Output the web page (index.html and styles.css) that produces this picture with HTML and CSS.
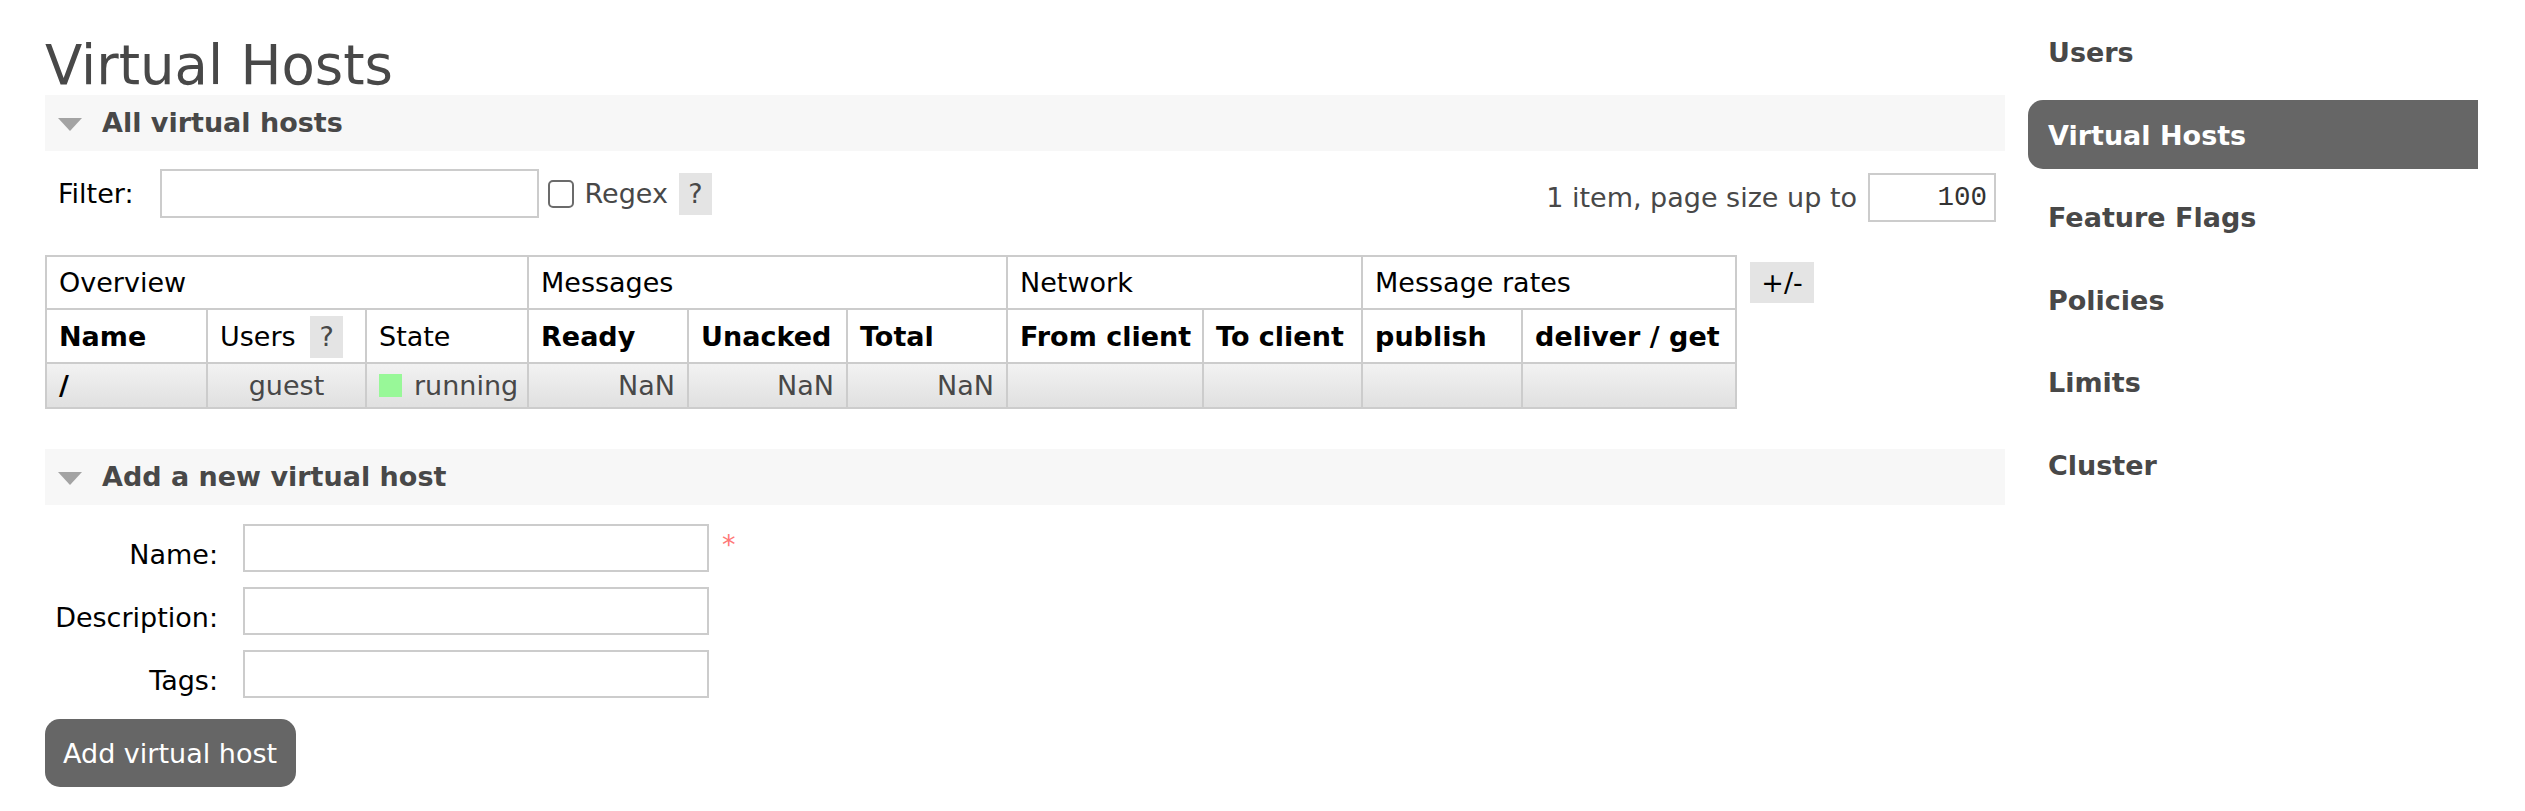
FILE: index.html
```html
<!DOCTYPE html>
<html>
<head>
<meta charset="utf-8">
<title>Virtual Hosts</title>
<link rel="stylesheet" href="styles.css">
</head>
<body>
<div class="page">
  <main class="main">
    <h1 class="title">Virtual Hosts</h1>

    <section class="section">
      <h2 class="section-head"><span class="tri"></span>All virtual hosts</h2>
      <div class="filter-row">
        <div class="filter-left">
          <label class="filter-label">Filter:</label>
          <input class="text-input filter-input" type="text">
          <input class="check" type="checkbox">
          <span class="regex">Regex</span>
          <span class="help">?</span>
        </div>
        <div class="filter-right">
          <span class="count">1 item, page size up to</span>
          <input class="text-input page-size" type="text" value="100">
        </div>
      </div>

      <div class="table-wrap">
        <table class="list">
          <colgroup>
            <col class="w-name"><col class="w-users"><col class="w-state">
            <col class="w-ready"><col class="w-unacked"><col class="w-total">
            <col class="w-from"><col class="w-to">
            <col class="w-publish"><col class="w-deliver">
          </colgroup>
          <thead>
            <tr class="group-row">
              <th colspan="3">Overview</th>
              <th colspan="3">Messages</th>
              <th colspan="2">Network</th>
              <th colspan="2">Message rates</th>
            </tr>
            <tr class="col-row">
              <th>Name</th>
              <th class="plain">Users <span class="help help-th">?</span></th>
              <th class="plain">State</th>
              <th>Ready</th>
              <th>Unacked</th>
              <th>Total</th>
              <th>From client</th>
              <th>To client</th>
              <th>publish</th>
              <th>deliver / get</th>
            </tr>
          </thead>
          <tbody>
            <tr class="data-row">
              <td class="vname">/</td>
              <td class="center">guest</td>
              <td><span class="status-green"></span>running</td>
              <td class="right">NaN</td>
              <td class="right">NaN</td>
              <td class="right">NaN</td>
              <td></td>
              <td></td>
              <td></td>
              <td></td>
            </tr>
          </tbody>
        </table>
        <span class="toggle">+/-</span>
      </div>
    </section>

    <section class="section section-add">
      <h2 class="section-head"><span class="tri"></span>Add a new virtual host</h2>
      <form class="add-form">
        <div class="form-row">
          <label class="form-label">Name:</label>
          <input class="text-input form-input" type="text">
          <span class="mand">*</span>
        </div>
        <div class="form-row">
          <label class="form-label">Description:</label>
          <input class="text-input form-input" type="text">
        </div>
        <div class="form-row">
          <label class="form-label">Tags:</label>
          <input class="text-input form-input" type="text">
        </div>
        <button class="btn" type="button">Add virtual host</button>
      </form>
    </section>
  </main>

  <nav class="side">
    <ul class="side-list">
      <li><a class="side-link" href="#">Users</a></li>
      <li><a class="side-link active" href="#">Virtual Hosts</a></li>
      <li><a class="side-link" href="#">Feature Flags</a></li>
      <li><a class="side-link" href="#">Policies</a></li>
      <li><a class="side-link" href="#">Limits</a></li>
      <li><a class="side-link" href="#">Cluster</a></li>
    </ul>
  </nav>
</div>
</body>
</html>
```

FILE: styles.css
```css
* { box-sizing: border-box; }

html, body {
  margin: 0;
  padding: 0;
  background: #fff;
}

body {
  font-family: "DejaVu Sans", Verdana, sans-serif;
  font-size: 27px;
  line-height: 31px;
  color: #484848;
}

.page {
  display: flex;
  align-items: flex-start;
}

.main {
  flex: none;
  width: 2005px;
  padding: 36px 0 0 45px;
}

.title {
  margin: 0;
  font-size: 54.5px;
  line-height: 59px;
  font-weight: normal;
  color: #484848;
}

.section-head {
  display: flex;
  align-items: center;
  margin: 0;
  height: 56px;
  padding-left: 13px;
  background: #f7f7f7;
  font-size: 27px;
  line-height: 56px;
  font-weight: bold;
  color: #484848;
}

.tri {
  width: 0;
  height: 0;
  margin: 3px 20px 0 0;
  border-left: 12.5px solid transparent;
  border-right: 12.5px solid transparent;
  border-top: 13px solid #a3a3a3;
}

/* filter row */
.filter-row {
  display: flex;
  justify-content: space-between;
  align-items: flex-start;
  margin-top: 18px;
  padding: 0 9px 0 13px;
}

.filter-left,
.filter-right {
  display: flex;
  align-items: center;
  height: 49px;
}

.filter-right { margin-top: 4px; }

.filter-label { color: #000; }

.text-input {
  border: 2px solid #ccc;
  background: #fff;
  margin: 0;
  padding: 0 7px;
  outline: none;
}

.filter-input {
  width: 379px;
  height: 49px;
  margin-left: 26px;
}

.check {
  appearance: none;
  -webkit-appearance: none;
  width: 26px;
  height: 28px;
  margin: 0 11px 0 9px;
  border: 2px solid #6b6b6b;
  border-radius: 5px;
  background: #fff;
}

.regex { color: #484848; }

.help {
  display: inline-block;
  width: 33px;
  height: 42px;
  line-height: 42px;
  text-align: center;
  background: #e4e4e4;
  color: #484848;
  font-weight: normal;
}

.filter-left .help { margin-left: 11px; }

.count { color: #484848; }

.page-size {
  width: 128px;
  height: 49px;
  margin-left: 11px;
  font-family: "Liberation Mono", monospace;
  font-size: 27.5px;
  text-align: right;
  color: #333;
}

/* table */
.table-wrap {
  display: flex;
  align-items: flex-start;
  margin-top: 33px;
}

.list {
  flex: none;
  width: 1690px;
  table-layout: fixed;
  border-collapse: collapse;
  border: 2px solid #ccc;
}

.w-name { width: 161px; }
.w-users { width: 159px; }
.w-state { width: 162px; }
.w-ready { width: 160px; }
.w-unacked { width: 159px; }
.w-total { width: 160px; }
.w-from { width: 196px; }
.w-to { width: 159px; }
.w-publish { width: 160px; }
.w-deliver { width: 214px; }

.list th,
.list td {
  border: 2px solid #ccc;
  padding: 10px 12px;
  text-align: left;
  white-space: nowrap;
  color: #000;
}

.group-row th { font-weight: normal; }

.col-row th {
  padding: 11px 12px 10px;
  font-weight: bold;
}
.col-row th.plain { font-weight: normal; }

.help-th {
  margin: -6px 0 -6px 6px;
}

.data-row td {
  padding: 6px 12px;
  background: linear-gradient(#f2f2f2, #e0e0e0);
  color: #484848;
}

.data-row td.vname { font-weight: bold; color: #000; }
.data-row td.center { text-align: center; }
.data-row td.right { text-align: right; }

.status-green {
  display: inline-block;
  width: 23px;
  height: 23px;
  margin-right: 12px;
  vertical-align: -2px;
  background: #98f898;
}

.toggle {
  flex: none;
  width: 64px;
  height: 41px;
  margin: 7px 0 0 13px;
  line-height: 41px;
  text-align: center;
  background: #e4e4e4;
  color: #000;
}

/* add form */
.section-add { margin-top: 40px; }

.add-form {
  display: flex;
  flex-direction: column;
  align-items: flex-start;
  gap: 15px;
  margin-top: 19px;
}

.form-row {
  display: flex;
  align-items: flex-start;
}

.form-label {
  width: 173px;
  padding-top: 15px;
  text-align: right;
  color: #000;
}

.form-input {
  width: 466px;
  height: 48px;
  margin-left: 25px;
}

.mand {
  margin: 5px 0 0 13px;
  color: #f77;
}

.btn {
  margin-top: 6px;
  padding: 19px 19px 18px 18px;
  border: none;
  border-radius: 15px;
  background: #666;
  color: #fff;
  font-family: "DejaVu Sans", Verdana, sans-serif;
  font-size: 27px;
  line-height: 31px;
}

/* sidebar */
.side {
  flex: none;
  width: 450px;
  margin-left: 23px;
  padding-top: 17px;
}

.side-list {
  list-style: none;
  margin: 0;
  padding: 0;
}

.side-link {
  display: block;
  margin-bottom: 13.5px;
  padding: 20px 20px 18px;
  line-height: 31px;
  border-radius: 15px 0 0 15px;
  font-weight: bold;
  color: #484848;
  text-decoration: none;
}

.side-link.active {
  background: #666;
  color: #fff;
}
```
